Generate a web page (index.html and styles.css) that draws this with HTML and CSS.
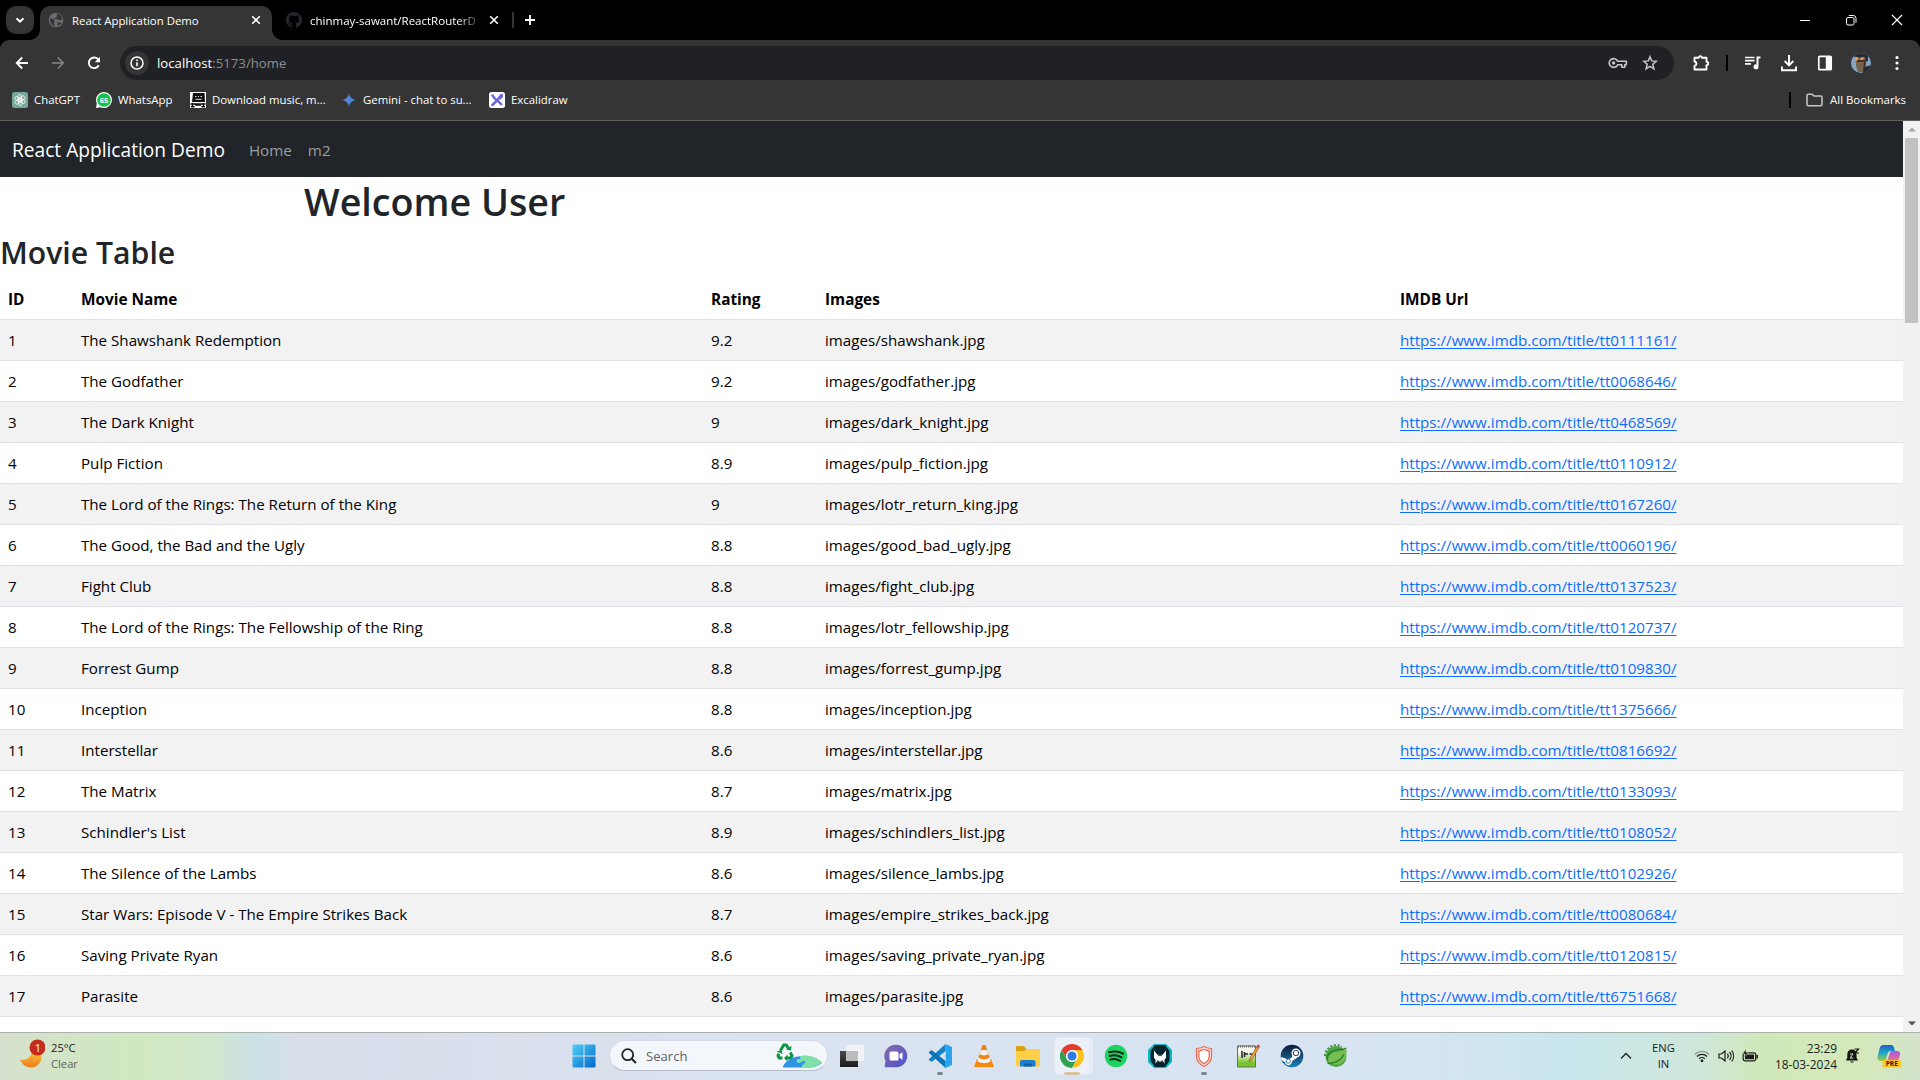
FILE: index.html
```html
<!DOCTYPE html>
<html lang="en">
<head>
<meta charset="utf-8">
<title>React Application Demo</title>
<link rel="stylesheet" href="styles.css">
</head>
<body>
<div class="screen">
  <header class="tabstrip">
    <button class="tab-search"><svg width="12" height="12" viewBox="0 0 12 12"><path d="M2.5 4.2 6 7.7l3.5-3.5" fill="none" stroke="#fff" stroke-width="2"/></svg></button>
    <div class="tab active">
      <svg class="favicon" width="16" height="16" viewBox="0 0 16 16"><circle cx="8" cy="8" r="7.3" fill="#696c70"/><path d="M2.3 6.2c2 .3 3.7 1 4.3 2.3.5 1.200-.8 1.800-.5 3.300l1 2.200C4 13.800 1.500 11 2.300 6.200zM9 1.600C8.200 3 9.800 4 8.600 5.200 7.600 6.200 6 5.400 6.100 6.900c1.700.3 2.600-.2 3.900.7 1.400 1 2.500.2 4.200-.2C14.200 4 12 1.900 9 1.600zM10 10.500c1.300-.6 2.500 0 3.200.6-.8 1.400-2 2.300-3.600 2.700-.3-1-.4-2.600.4-3.300z" fill="#353535"/></svg>
      <span class="tab-title">React Application Demo</span>
      <svg class="close" width="10" height="10" viewBox="0 0 10 10"><path d="m1.200 1.200 7.600 7.600M8.800 1.200 1.200 8.800" stroke="#fff" stroke-width="1.600"/></svg>
    </div>
    <div class="tab">
      <svg class="favicon" width="16" height="16" viewBox="0 0 16 16"><path fill="#24292f" d="M8 0C3.580 0 0 3.580 0 8c0 3.540 2.290 6.530 5.470 7.590.4.070.55-.17.55-.38 0-.19-.010-.82-.010-1.490-2.010.37-2.530-.49-2.690-.94-.090-.23-.48-.94-.82-1.130-.28-.15-.68-.52-.010-.53.63-.010 1.080.58 1.230.82.72 1.210 1.870.87 2.330.66.070-.52.28-.87.51-1.070-1.780-.2-3.640-.89-3.640-3.950 0-.87.31-1.590.82-2.150-.080-.2-.36-1.020.080-2.120 0 0 .67-.21 2.200.82a7.600 7.600 0 0 1 4 0c1.530-1.040 2.200-.82 2.200-.82.44 1.100.16 1.920.080 2.120.51.56.82 1.270.82 2.150 0 3.070-1.870 3.750-3.650 3.950.29.25.54.73.54 1.480 0 1.070-.010 1.930-.010 2.200 0 .21.15.46.55.38A8 8 0 0 0 8 0z"/></svg>
      <span class="tab-title fade">chinmay-sawant/ReactRouterDemo</span>
      <svg class="close" width="10" height="10" viewBox="0 0 10 10"><path d="m1.200 1.200 7.600 7.600M8.800 1.200 1.200 8.800" stroke="#fff" stroke-width="1.600"/></svg>
    </div>
    <i class="tab-rule"></i>
    <svg class="newtab" width="12" height="12" viewBox="0 0 12 12"><path d="M6 1v10M1 6h10" stroke="#fff" stroke-width="1.800"/></svg>
    <div class="window-buttons">
      <svg width="12" height="12" viewBox="0 0 12 12"><path d="M1 6.500h10" stroke="#fff"/></svg>
      <svg width="12" height="12" viewBox="0 0 12 12"><rect x="1.500" y="3.500" width="7.500" height="7.500" rx="1.500" fill="none" stroke="#fff"/><path d="M3.800 1.500h4.400a2.800 2.800 0 0 1 2.800 2.800v4.400" fill="none" stroke="#fff"/></svg>
      <svg width="12" height="12" viewBox="0 0 12 12"><path d="m1 1 10 10M11 1 1 11" stroke="#fff" stroke-width="1.200"/></svg>
    </div>
  </header>

  <div class="toolbar">
    <div class="nav-buttons">
      <svg width="14" height="14" viewBox="0 0 14 14"><path d="M13 7H2M7.200 1.500 1.700 7l5.500 5.500" fill="none" stroke="#fff" stroke-width="1.800"/></svg>
      <svg width="14" height="14" viewBox="0 0 14 14"><path d="M1 7h11M6.800 1.500 12.300 7l-5.500 5.500" fill="none" stroke="#868686" stroke-width="1.600"/></svg>
      <svg width="14" height="14" viewBox="0 0 14 14"><path d="M11.800 9.300A5.300 5.300 0 1 1 11 3.200L12.300 5" fill="none" stroke="#fff" stroke-width="1.900"/><path d="M13 .8v5.400H7.800z" fill="#fff"/></svg>
    </div>
    <div class="omnibox">
      <span class="site-info"><svg width="14" height="14" viewBox="0 0 14 14"><circle cx="7" cy="7" r="6" fill="none" stroke="#fff" stroke-width="1.500"/><path d="M7 6.200v4M7 3.400v1.500" stroke="#fff" stroke-width="1.600"/></svg></span>
      <span class="url"><b>localhost</b>:5173/home</span>
      <svg width="20" height="12" viewBox="0 0 20 12"><path d="M9.600 4.200h8.700v3.600h-1.500v2.400h-3V7.800H9.600a4.400 4.400 0 1 1 0-3.600z" fill="none" stroke="#c7c7c7" stroke-width="1.600" stroke-linejoin="round"/><circle cx="5.600" cy="6" r="1.700" fill="#c7c7c7"/></svg>
      <svg width="16" height="16" viewBox="0 0 16 16"><path d="m8 1.700 1.700 4.200 4.600.4-3.500 3 1.100 4.500L8 11.400l-3.900 2.400 1.100-4.500-3.500-3 4.600-.4z" fill="none" stroke="#c7c7c7" stroke-width="1.500"/></svg>
    </div>
    <div class="actions">
      <svg class="puzzle" width="18" height="18" viewBox="0 0 18 18"><path d="M2.500 3.700h4.200a1.600 1.600 0 0 1 3.200 0h4.600v4.100a1.700 1.700 0 0 1 0 3.400v4.300h-12v-3.700c2.600-.7 2.600-3.600 0-4.300z" fill="none" stroke="#fff" stroke-width="1.900" stroke-linejoin="round"/></svg>
      <i class="rule"></i>
      <svg class="playlist" width="18" height="16" viewBox="0 0 18 16"><path d="M1 2.500h9.500M1 5.700h9.500M1 8.900h6" stroke="#fff" stroke-width="1.700"/><path d="M12.500 1.500h4v2h-2v8.300a2.500 2.500 0 1 1-2-2.400z" fill="#fff"/></svg>
      <svg class="download" width="18" height="18" viewBox="0 0 18 18"><path d="M9 1v10M4.700 7 9 11.300 13.300 7M2 12.500v3.700h14v-3.700" fill="none" stroke="#fff" stroke-width="1.900"/></svg>
      <svg class="panel" width="16" height="16" viewBox="0 0 16 16"><rect x="1.800" y="1.300" width="12.400" height="13.400" rx="1" fill="none" stroke="#fff" stroke-width="1.700"/><path d="M8.800 1h5.400v14H8.800z" fill="#fff"/></svg>
      <svg class="avatar" width="20" height="20" viewBox="0 0 20 20"><defs><clipPath id="av"><circle cx="10" cy="10" r="10"/></clipPath></defs><g clip-path="url(#av)"><path fill="#86a5c7" d="M0 0h20v20H0z"/><path fill="#262a31" d="M3 0h14v8l-3 1-3-4-7 1zM11 20l2-6 8-2v8z"/><path fill="#8a6243" d="M4 5l10-1 1 9-4 6-5-2z"/><path fill="#d79a61" d="M4 4h3v4H4zM9 5l4-1-2 6z"/><path fill="#3d2e26" d="M6 7h8v2H6zM13 8l2 1-1 6-2 2z"/><path fill="#746250" d="M5 11l7-1-1 9-4 0z"/></g></svg>
      <svg class="menu" width="4" height="16" viewBox="0 0 4 16"><g fill="#fff"><circle cx="2" cy="2.500" r="1.600"/><circle cx="2" cy="8" r="1.600"/><circle cx="2" cy="13.500" r="1.600"/></g></svg>
    </div>
  </div>

  <nav class="bookmarks">
    <a class="bm chatgpt"><svg width="16" height="16" viewBox="0 0 16 16"><rect width="16" height="16" rx="2.500" fill="#75a99b"/><g fill="none" stroke="#fff" stroke-width=".75"><rect x="5.800" y="2.400" width="3.800" height="7" rx="1.900"/><rect x="5.800" y="2.400" width="3.800" height="7" rx="1.900" transform="rotate(60 8 8)"/><rect x="5.800" y="2.400" width="3.800" height="7" rx="1.900" transform="rotate(120 8 8)"/><rect x="5.800" y="2.400" width="3.800" height="7" rx="1.900" transform="rotate(180 8 8)"/><rect x="5.800" y="2.400" width="3.800" height="7" rx="1.900" transform="rotate(240 8 8)"/><rect x="5.800" y="2.400" width="3.800" height="7" rx="1.900" transform="rotate(300 8 8)"/></g></svg><span>ChatGPT</span></a>
    <a class="bm whatsapp"><svg width="16" height="16" viewBox="0 0 16 16"><path d="M8 0a8 8 0 1 1-3.500 15.200L0 16l.8-4.500A8 8 0 0 1 8 0z" fill="#fff"/><circle cx="8" cy="8" r="6.800" fill="#12c24a"/><text x="8" y="10.900" text-anchor="middle" class="wa-count">65</text></svg><span>WhatsApp</span></a>
    <a class="bm music"><svg width="16" height="16" viewBox="0 0 16 16"><path fill="#fff" d="M0 0h16v16H0z"/><path d="M3 1h11.500l.5 9H2z" fill="#111"/><path d="M5 4.500h1.500M8 4.500h1M10.500 4.500H12M5.500 7.300h6" stroke="#ddd"/><path d="M.5 12h15M2.500 11v3.500M13.500 11v3.500M1 14.700h3.500M11.500 14.700H15M5 13h6" stroke="#111" stroke-width="1.500"/></svg><span>Download music, m...</span></a>
    <a class="bm gemini"><svg width="14" height="14" viewBox="0 0 14 14"><defs><linearGradient id="gm"><stop stop-color="#9a78c4"/><stop offset=".5" stop-color="#4b86dc"/><stop offset="1" stop-color="#2b9cd8"/></linearGradient></defs><path d="M7 0c.5 4 3 6.500 7 7-4 .5-6.500 3-7 7-.5-4-3-6.500-7-7 4-.5 6.500-3 7-7z" fill="url(#gm)"/></svg><span>Gemini - chat to su...</span></a>
    <a class="bm excalidraw"><svg width="16" height="16" viewBox="0 0 16 16"><rect width="16" height="16" rx="2.500" fill="#fff"/><path d="M3 2.500c1 2.500 3 4.500 5 6s3.500 3 5 4.500M12.500 2.500 8.500 8 3 13.500" fill="none" stroke="#6965db" stroke-width="2.400"/><path d="m9.500 5 4.500-3.500v3.500l-3 3zM2 13l3-3.500L6.500 11 3.500 14.500z" fill="#6965db"/></svg><span>Excalidraw</span></a>
    <div class="all-bookmarks"><i class="rule"></i><svg width="17" height="14" viewBox="0 0 17 14"><path d="M1 2.500A1.300 1.300 0 0 1 2.300 1.200H6.200L7.900 3H14.700A1.300 1.300 0 0 1 16 4.300v7.200a1.300 1.300 0 0 1-1.300 1.300H2.300A1.300 1.300 0 0 1 1 11.500z" fill="none" stroke="#c7c7c7" stroke-width="1.500"/></svg><span>All Bookmarks</span></div>
  </nav>

  <div class="viewport">
    <main class="page">
      <nav class="navbar"><span class="brand">React Application Demo</span><a>Home</a><a>m2</a></nav>
      <h1>Welcome User</h1>
      <h2>Movie Table</h2>
      <table>
        <colgroup><col class="c-id"><col class="c-name"><col class="c-rating"><col class="c-img"><col></colgroup>
        <thead><tr><th>ID</th><th>Movie Name</th><th>Rating</th><th>Images</th><th>IMDB Url</th></tr></thead>
        <tbody>
          <tr><td>1</td><td>The Shawshank Redemption</td><td>9.2</td><td>images/shawshank.jpg</td><td><a>https://www.imdb.com/title/tt0111161/</a></td></tr>
          <tr><td>2</td><td>The Godfather</td><td>9.2</td><td>images/godfather.jpg</td><td><a>https://www.imdb.com/title/tt0068646/</a></td></tr>
          <tr><td>3</td><td>The Dark Knight</td><td>9</td><td>images/dark_knight.jpg</td><td><a>https://www.imdb.com/title/tt0468569/</a></td></tr>
          <tr><td>4</td><td>Pulp Fiction</td><td>8.9</td><td>images/pulp_fiction.jpg</td><td><a>https://www.imdb.com/title/tt0110912/</a></td></tr>
          <tr><td>5</td><td>The Lord of the Rings: The Return of the King</td><td>9</td><td>images/lotr_return_king.jpg</td><td><a>https://www.imdb.com/title/tt0167260/</a></td></tr>
          <tr><td>6</td><td>The Good, the Bad and the Ugly</td><td>8.8</td><td>images/good_bad_ugly.jpg</td><td><a>https://www.imdb.com/title/tt0060196/</a></td></tr>
          <tr><td>7</td><td>Fight Club</td><td>8.8</td><td>images/fight_club.jpg</td><td><a>https://www.imdb.com/title/tt0137523/</a></td></tr>
          <tr><td>8</td><td>The Lord of the Rings: The Fellowship of the Ring</td><td>8.8</td><td>images/lotr_fellowship.jpg</td><td><a>https://www.imdb.com/title/tt0120737/</a></td></tr>
          <tr><td>9</td><td>Forrest Gump</td><td>8.8</td><td>images/forrest_gump.jpg</td><td><a>https://www.imdb.com/title/tt0109830/</a></td></tr>
          <tr><td>10</td><td>Inception</td><td>8.8</td><td>images/inception.jpg</td><td><a>https://www.imdb.com/title/tt1375666/</a></td></tr>
          <tr><td>11</td><td>Interstellar</td><td>8.6</td><td>images/interstellar.jpg</td><td><a>https://www.imdb.com/title/tt0816692/</a></td></tr>
          <tr><td>12</td><td>The Matrix</td><td>8.7</td><td>images/matrix.jpg</td><td><a>https://www.imdb.com/title/tt0133093/</a></td></tr>
          <tr><td>13</td><td>Schindler's List</td><td>8.9</td><td>images/schindlers_list.jpg</td><td><a>https://www.imdb.com/title/tt0108052/</a></td></tr>
          <tr><td>14</td><td>The Silence of the Lambs</td><td>8.6</td><td>images/silence_lambs.jpg</td><td><a>https://www.imdb.com/title/tt0102926/</a></td></tr>
          <tr><td>15</td><td>Star Wars: Episode V - The Empire Strikes Back</td><td>8.7</td><td>images/empire_strikes_back.jpg</td><td><a>https://www.imdb.com/title/tt0080684/</a></td></tr>
          <tr><td>16</td><td>Saving Private Ryan</td><td>8.6</td><td>images/saving_private_ryan.jpg</td><td><a>https://www.imdb.com/title/tt0120815/</a></td></tr>
          <tr><td>17</td><td>Parasite</td><td>8.6</td><td>images/parasite.jpg</td><td><a>https://www.imdb.com/title/tt6751668/</a></td></tr>
          <tr><td>18</td><td>Gladiator</td><td>8.5</td><td>images/gladiator.jpg</td><td><a>https://www.imdb.com/title/tt0172495/</a></td></tr>
        </tbody>
      </table>
    </main>
    <div class="scrollbar">
      <svg width="8" height="5" viewBox="0 0 8 5"><path d="M0 4.500 4 .5l4 4z" fill="#a3a3a3"/></svg>
      <i class="thumb"></i>
      <svg width="8" height="5" viewBox="0 0 8 5"><path d="M0 .5h8l-4 4z" fill="#505050"/></svg>
    </div>
  </div>

  <footer class="taskbar">
    <div class="weather">
      <svg width="26" height="30" viewBox="0 0 26 30"><defs><linearGradient id="mn" x2="0" y2="1"><stop stop-color="#f6c23a"/><stop offset="1" stop-color="#f07a1c"/></linearGradient></defs><path d="M1 20.500c5 1.500 11-1 12-8h8c4 8-1 16-9 16-5 0-9-3-11-8z" fill="url(#mn)"/><circle cx="18.500" cy="8.500" r="8" fill="#c42b1c"/><text x="19" y="12.600" text-anchor="middle" class="badge">1</text></svg>
      <p><span>25°C</span><span class="muted">Clear</span></p>
    </div>
    <div class="apps">
      <div class="app"><svg width="24" height="24" viewBox="0 0 24 24"><defs><linearGradient id="wn" x2="1" y2="1"><stop stop-color="#4fd0fb"/><stop offset="1" stop-color="#0067c8"/></linearGradient></defs><path d="M.5 1.500a1 1 0 0 1 1-1H11.500v11H.5zM12.500.5h10a1 1 0 0 1 1 1v10h-11zM.5 12.500h11v11H1.500a1 1 0 0 1-1-1zM12.500 12.500h11v10a1 1 0 0 1-1 1h-10z" fill="url(#wn)"/></svg></div>
      <div class="search">
        <svg width="16" height="16" viewBox="0 0 16 16"><circle cx="6.700" cy="6.700" r="5.500" fill="none" stroke="#222" stroke-width="1.800"/><path d="m10.700 10.700 4.300 4.300" stroke="#222" stroke-width="2"/></svg>
        <span>Search</span>
        <svg class="earth" width="48" height="28" viewBox="0 0 48 28"><g fill="none" stroke="#0c9440" stroke-width="3" stroke-linejoin="round"><path d="m5.500 8.500 3.200-5.500h2.600l2.500 4M15.300 10.500l1.700 3.200-1.200 2.300h-4M7.500 16H4.200L3 13.700l1-2"/></g><path d="m11 7.500 5 1 .5-4.800zM12.500 12.500v7L9 16zM1.500 9.500l5-1.500L7.500 12z" fill="#0c9440"/><path d="M7.500 25.500c5-14 30-15 39.500-4.500-4 3-8 4.500-12 4.500z" fill="#2f93e6"/><path d="M22 20.500c-1-3 0-4 4-3.500-3-2 0-3 2-3.500 8-.5 14 2 19 7-4 3-8 5-12 5h-8c-1-3 4-4 3-6-2-2-5 3-8 1z" fill="#7fe0a8"/></svg>
      </div>
      <div class="app"><svg width="24" height="24" viewBox="0 0 24 24"><defs><linearGradient id="tv" y2="1" x2="0"><stop stop-color="#4a4a4a"/><stop offset="1" stop-color="#1c1c1c"/></linearGradient></defs><path d="M0 7h18v16H0z" fill="url(#tv)"/><path d="M6 1h18v16H6z" fill="#f3f3f3" opacity=".9"/><path d="M6 7h12v10H6z" fill="#bcbcbc"/></svg></div>
      <div class="app"><svg width="24" height="24" viewBox="0 0 24 24"><defs><linearGradient id="ct" x2="1" y2="1"><stop stop-color="#8a6aa8"/><stop offset="1" stop-color="#4b53cf"/></linearGradient></defs><path d="M12 .8a11.200 11.200 0 1 1 0 22.400H1.500a1 1 0 0 1-.8-1.200l.8-5A11.200 11.200 0 0 1 12 .8z" fill="url(#ct)"/><rect x="5.500" y="7.500" width="9" height="9" rx="1.500" fill="#fff"/><path d="m15.500 10.500 3-2.500v8l-3-2.500z" fill="#fff"/></svg></div>
      <div class="app running"><svg width="24" height="24" viewBox="0 0 24 24"><path d="m17.500 0 .2 7L3.500 18 .5 15.500z" fill="#1583c7"/><path d="m.5 8.500 3-2.500 14.200 11-.2 7z" fill="#0b73b7"/><path d="M17.500 0 24 3v18l-6.500 3-1-1 1.200-2V3z" fill="#27a5ef"/></svg></div>
      <div class="app"><svg width="24" height="24" viewBox="0 0 24 24"><path d="m5 15-3 8h20l-3-8z" fill="#f58709"/><path d="M10.500 1h3L19 18c-3 3-11 3-14 0z" fill="#f08113"/><path d="m9 6-1.400 4.300c2 1.500 6.800 1.500 8.800 0L15 6zM6.400 13.600 5.300 17.300c3 2.500 10.400 2.500 13.400 0l-1.100-3.700c-3 2.200-8.200 2.200-11.200 0z" fill="#f2efec"/></svg></div>
      <div class="app"><svg width="24" height="24" viewBox="0 0 24 24"><path d="M0 3a1 1 0 0 1 1-1h7l2.500 3v4H0z" fill="#dfa010"/><path d="M0 7h8l2-2h13a1 1 0 0 1 1 1v15.500a1 1 0 0 1-1 1H1a1 1 0 0 1-1-1z" fill="#ffcf48"/><path d="M4 22.500V18a2 2 0 0 1 2-2h11.500a2 2 0 0 1 2 2v4.500z" fill="#1b7ed0"/><path d="M8 19.500h8v3H8z" fill="#0c60ae"/></svg></div>
      <div class="app selected"><svg width="24" height="24" viewBox="0 0 24 24"><circle cx="12" cy="12" r="12" fill="#fff"/><path d="M1.600 6a12 12 0 0 1 20.800 0H12a6 6 0 0 0-5.200 9z" fill="#e33b2e"/><path d="M1.600 6A12 12 0 0 0 12 24l5.200-9a6 6 0 0 1-10.400 0z" fill="#2da14d"/><path d="M22.400 6A12 12 0 0 1 12 24l5.200-9a6 6 0 0 0-5.200-9z" fill="#fcc31e"/><circle cx="12" cy="12" r="5.800" fill="#fff"/><circle cx="12" cy="12" r="4.600" fill="#2f7ce8"/></svg></div>
      <div class="app"><svg width="24" height="24" viewBox="0 0 24 24"><circle cx="12" cy="12" r="11.200" fill="#1ed35f"/><path d="M5 8.300c4.700-1.400 10-1 14 1.300M5.600 12c4-1.200 8.600-.7 12 1.300M6.200 15.600c3.400-1 7-.6 10 1.200" fill="none" stroke="#10271a" stroke-width="2" stroke-linecap="round"/></svg></div>
      <div class="app"><svg width="24" height="24" viewBox="0 0 24 24"><path d="M6 0h12l6 6v12l-6 6H6l-6-6V6z" fill="#0ab7c2"/><path d="M7 1h10l4.500 6v10L17 23H7l-4.500-6V7z" fill="#04252d"/><path d="M6 6.500 9.500 11l.8-1v2.500l1.700-1 1.700 1V10l.8 1L18 6.500V14l-1.500 1.500v4L14 16l-.8 1.500h-2.400L10 16l-2.500 3.500v-4L6 14z" fill="#fff"/></svg></div>
      <div class="app running"><svg width="24" height="24" viewBox="0 0 24 24"><path d="M12 2.500c2.500 1.500 5 2 7.500 2v8c0 4-2.500 7.500-7.500 10-5-2.500-7.500-6-7.500-10v-8c2.500 0 5-.5 7.500-2z" fill="#fae5e0" stroke="#ec6a50" stroke-width="1.200"/><path d="M12 5.200c1.800 1 3.500 1.500 5.200 1.600v5.700c0 3-1.700 5.300-5.200 7.200-3.500-1.900-5.200-4.200-5.200-7.200V6.800c1.700-.1 3.400-.6 5.200-1.600z" fill="#fff" stroke="#ec6a50" stroke-width="1.300"/></svg></div>
      <div class="app"><svg width="24" height="24" viewBox="0 0 24 24"><defs><linearGradient id="np" x2="0" y2="1"><stop offset=".35" stop-color="#f5f7ef"/><stop offset=".8" stop-color="#76c52c"/></linearGradient></defs><path d="M1.500 2h18v21h-18z" fill="url(#np)" stroke="#66705f"/><path d="M2 2.500h17" stroke="#666" stroke-width="2" stroke-dasharray="1 1"/><path d="M6 7v7M8.500 8v5M9 10h3M13.500 10h3" stroke="#222" stroke-width="1.500"/><path d="m13 18 1-4 7.500-12.500 2 1.200L16 15.500z" fill="#eaa33b" stroke="#8a5a22" stroke-width=".7"/><path d="m20.500 3 1.300-2.500 2 1L22.500 4z" fill="#c5483f"/></svg></div>
      <div class="app"><svg width="24" height="24" viewBox="0 0 24 24"><defs><linearGradient id="st" x2="0" y2="1"><stop stop-color="#101b3b"/><stop offset="1" stop-color="#1781b5"/></linearGradient></defs><circle cx="12" cy="12" r="11.300" fill="url(#st)"/><path d="m1 13 6.500 2.200 3.500-1 3-4.500 3 4-4.500 3-1 2.500c-1.500 3-6 2.500-6.500-1L1.500 16z" fill="#fff"/><circle cx="16" cy="9" r="4.500" fill="#fff"/><circle cx="16" cy="9" r="3" fill="#16264b"/><circle cx="16" cy="9" r="2.200" fill="#fff"/><circle cx="8.300" cy="17.200" r="2.100" fill="none" stroke="#17608e" stroke-width=".8"/></svg></div>
      <div class="app"><svg width="24" height="24" viewBox="0 0 24 24"><path d="M12 12m-11 0a11 11 0 0 1 17-9" fill="none" stroke="#3d8b3c" stroke-width="2" stroke-dasharray="2 1.700"/><circle cx="12" cy="12.500" r="10.500" fill="#4fa644"/><path d="M22.500 5c-4 3-9 2-13 3.500-5 2-6.500 7-4 10.500 7 3 14 1 16-5 1-3 1.500-6 1-9z" fill="#74bf4f"/><path d="M3.500 19.500c7 0 13-2.500 16.500-9M3 16c0-6 4-9 9-10 4-.7 8 0 10-2" fill="none" stroke="#2f7d35" stroke-width="1.500"/></svg></div>
    </div>
    <div class="tray">
      <svg class="chev" width="12" height="8" viewBox="0 0 12 8"><path d="m1 6.500 5-5 5 5" fill="none" stroke="#222" stroke-width="1.400"/></svg>
      <p class="lang"><span>ENG</span><span>IN</span></p>
      <svg class="wifi" width="16" height="14" viewBox="0 0 16 14"><g fill="none" stroke="#1c1c1c" stroke-width="1.200"><path d="M.8 5.500a10 10 0 0 1 14.400 0" opacity=".35"/><path d="M3 7.500a7 7 0 0 1 10 0M5.200 9.800a4 4 0 0 1 5.600 0"/></g><circle cx="8" cy="11.800" r="1.400" fill="#1c1c1c"/></svg>
      <svg class="vol" width="17" height="14" viewBox="0 0 17 14"><g fill="none" stroke="#1c1c1c" stroke-width="1.200"><path d="M1 5v4h2.500l3.500 3V2L3.500 5zM9.300 4.800a3 3 0 0 1 0 4.400M11.500 3a6 6 0 0 1 0 8M13.700 1.500a9 9 0 0 1 0 11"/></g></svg>
      <svg class="bat" width="17" height="14" viewBox="0 0 17 14"><rect x="1.200" y="3.800" width="12.500" height="8" rx="1.800" fill="none" stroke="#1c1c1c" stroke-width="1.300"/><path d="M3 5.500h9v4.800H3zM14.500 6h1.500v3.500h-1.500z" fill="#1c1c1c"/><path d="M4 0 .5 5H3L2 8.500 6.500 3.300H4z" fill="#1c1c1c" stroke="#d3e8cc" stroke-width=".5"/></svg>
      <p class="clock"><span>23:29</span><span>18-03-2024</span></p>
      <svg class="bell" width="15" height="16" viewBox="0 0 15 16"><path d="M6.500 1.500c3.500 0 5 2 5 5v3l1.500 3H1l1.300-3v-3c0-3 1.700-5 4.200-5zM5 13.500h4c-.5 1.500-3.500 1.500-4 0z" fill="#151515"/><path d="M5 6h3l-3 4h3.300" fill="none" stroke="#d3e8b8" stroke-width="1"/><path d="M9.500 1h4l-3.500 4h4" fill="none" stroke="#151515" stroke-width="1.200"/></svg>
      <svg class="copilot" width="24" height="24" viewBox="0 0 24 24"><defs><linearGradient id="cp1" x2="0" y2="1"><stop stop-color="#1b5fc4"/><stop offset=".5" stop-color="#1fa8c8"/><stop offset="1" stop-color="#9ecb3b"/></linearGradient><linearGradient id="cp2" x2="0" y2="1"><stop stop-color="#a45be0"/><stop offset="1" stop-color="#f4718b"/></linearGradient></defs><path d="M6.500 1H14c2 0 2.500 1 3 2.500L18 7h-4c-2 0-3 1-3.500 3L8.500 17H4c-2.500 0-4-2-3.300-5l2-8C3.300 2 4.500 1 6.500 1z" fill="url(#cp1)"/><path d="M15.500 7H20c2.500 0 3.700 2 3 4.500l-2 6H10l2.700-8C13.200 7.700 14 7 15.500 7z" fill="url(#cp2)"/><rect x="5.500" y="16" width="18.500" height="7.500" rx="2" fill="#ffc81f"/><text x="14.800" y="22.300" text-anchor="middle" class="pre">PRE</text></svg>
    </div>
  </footer>
</div>
</body>
</html>
```
FILE: styles.css
```css
* { box-sizing: border-box; }
body { margin: 0; overflow: hidden; font-family: "Segoe UI", "Open Sans", sans-serif; }
svg { display: block; flex: none; }
p { margin: 0; }
.screen { width: 1920px; height: 1080px; display: flex; flex-direction: column; background: #000; overflow: hidden; }

/* tab strip */
.tabstrip { height: 40px; flex: none; display: flex; align-items: center; padding-left: 6px; background: #000; color: #fff; font-size: 11.4px; }
.tab-search { width: 28px; height: 28px; margin-right: 6px; padding: 0; border: 0; border-radius: 10px; background: #353535; display: grid; place-items: center; }
.tab { width: 232px; height: 34px; align-self: flex-end; display: flex; align-items: center; padding: 0 11px 6px 8px; position: relative; }
.tab.active { background: #353535; border-radius: 10px 10px 0 0; }
.tab.active::before, .tab.active::after { content: ""; position: absolute; bottom: 0; width: 10px; height: 10px; }
.tab.active::before { left: -10px; background: radial-gradient(circle at 0 0, transparent 9.5px, #353535 10px); }
.tab.active::after { right: -10px; background: radial-gradient(circle at 100% 0, transparent 9.5px, #353535 10px); }
.tab:not(.active) { width: 240px; padding-left: 14px; padding-right: 13px; }
.tab-title { flex: 1; margin: 2px 0 0 8px; line-height: 16px; white-space: nowrap; overflow: hidden; }
.tab-title.fade { margin-right: 14px; -webkit-mask-image: linear-gradient(90deg, #000 148px, transparent 173px); mask-image: linear-gradient(90deg, #000 148px, transparent 173px); font-size: 11.5px; }
.tab-rule { width: 2px; height: 16px; background: #353535; }
.newtab { margin-left: 10px; }
.window-buttons { margin-left: auto; display: flex; gap: 34px; padding-right: 17px; }

/* toolbar */
.toolbar { height: 46px; flex: none; display: flex; align-items: center; background: #353535; border-radius: 9px 9px 0 0; }
.nav-buttons { width: 120px; display: flex; gap: 22px; padding-left: 15px; }
.omnibox { width: 1554px; height: 34px; border-radius: 17px; background: #202124; display: flex; align-items: center; gap: 14px; padding: 0 16px 0 5px; }
.site-info { width: 24px; height: 24px; border-radius: 50%; background: #353535; display: grid; place-items: center; }
.url { flex: 1; margin-left: -6px; color: #8e8f91; font-size: 13.2px; line-height: 20px; }
.url b { font-weight: 400; color: #fff; }
.actions { display: flex; align-items: center; padding-left: 18px; }
.rule { width: 2px; height: 16px; background: #000; }
.actions .rule, .actions .playlist { margin-left: 16px; }
.download { margin-left: 18px; }
.panel { margin-left: 19px; }
.avatar { margin-left: 18px; }
.menu { margin-left: 24px; }

/* bookmarks */
.bookmarks { height: 35px; flex: none; display: flex; padding: 6px 14px 0 12px; background: #353535; border-bottom: 1px solid #606060; color: #fff; font-size: 11.4px; line-height: 16px; }
.bm { display: flex; gap: 6px; white-space: nowrap; }
.chatgpt { width: 84px; }
.whatsapp { width: 94px; }
.music { width: 152px; }
.gemini { width: 147px; gap: 7px; }
.gemini svg { margin-top: 1px; }
.wa-count { font: 700 7.5px "Open Sans", sans-serif; fill: #fff; }
.all-bookmarks { margin-left: auto; display: flex; align-items: center; height: 16px; }
.all-bookmarks svg { margin: 0 7px 0 15px; }

/* page */
.viewport { height: 911px; flex: none; display: flex; }
.page { width: 1903px; background: #fff; overflow: hidden; color: #212529; }
.navbar { height: 56px; padding: 1px 12px 0; display: flex; align-items: center; background: #212529; color: #9b9d9e; font-size: 15.2px; }
.navbar .brand { color: #fff; font-size: 19.15px; margin-right: 24px; }
.navbar a { margin-right: 16px; }
h1 { margin: 0 0 7px; padding: 1px 0 0 304px; font-size: 37.7px; font-weight: 600; line-height: 48px; }
h2 { margin: 0 0 7px; padding-top: 1px; font-size: 30.2px; font-weight: 600; line-height: 38px; }
table { width: 1903px; table-layout: fixed; border-spacing: 0; color: #000; font-size: 15.15px; line-height: 24px; }
.c-id { width: 73px; }
.c-name { width: 630px; }
.c-rating { width: 114px; }
.c-img { width: 575px; }
th, td { height: 41px; padding: 8px; text-align: left; white-space: nowrap; border-bottom: 1px solid #dee2e6; }
th { font-size: 15.35px; font-weight: 700; }
tbody tr:nth-child(odd) { background: #f2f2f2; }
td a { color: #0d6efd; text-decoration: underline; text-decoration-thickness: 1px; text-underline-offset: 2px; }

.scrollbar { width: 17px; background: #f1f1f1; display: flex; flex-direction: column; align-items: center; padding: 6px 0; }
.thumb { width: 13px; height: 185px; margin: 6px 0 auto; background: #c1c1c1; }

/* taskbar */
.taskbar { height: 48px; flex: none; display: flex; align-items: center; padding-bottom: 2px; border-top: 1px solid #a9b0ad; color: #1a1a1a;
  background: linear-gradient(90deg, #d5e1cd 0, #d0e8c0 135px, #d1e6cb 205px, #cce1e6 260px, #d8deea 300px, #dae3f0 800px, #d7e4f2 1400px, #c8e6ec 1570px, #cfe7da 1700px, #d0e8b9 1760px, #d4e9ba 1860px, #d4e3cb 1920px); }
.taskbar p { display: flex; flex-direction: column; font-size: 11.2px; line-height: 16px; }
.weather { width: 562px; display: flex; gap: 6px; padding-left: 19px; }
.weather svg { margin-top: -1px; }
.muted { color: #5b625b; }
.badge { font: 11px "Open Sans", sans-serif; fill: #fff; }
.apps { display: flex; align-items: center; }
.app { width: 44px; height: 38px; display: grid; place-items: center; position: relative; }
.app:first-child { margin-right: 3px; }
.running::after, .selected::after { content: ""; position: absolute; bottom: 0; left: 19px; width: 6px; height: 3px; border-radius: 2px; background: #7d838a; }
.selected::after { left: 14px; width: 16px; background: #d6c49f; }
.selected::before { content: ""; position: absolute; inset: 0 4px 0 4px; border-radius: 4px; background: #ecf1f9; border: 1px solid #e4e9f2; box-shadow: 4px 0 0 -1px #e8eef8; }
.selected svg { position: relative; }
.search { width: 219px; height: 31px; margin-right: 2px; display: flex; align-items: center; padding: 0 4px 0 11px; border-radius: 16px; background: #f3f6fb; border: 1px solid #d2d9e4; border-bottom-color: #b4bdca; color: #606266; font-size: 13.1px; }
.search span { margin-left: 9px; }
.earth { margin-left: auto; }
.tray { margin-left: auto; display: flex; align-items: center; padding-right: 19px; }
.chev { margin-right: 1px; }
.lang { width: 61px; align-items: center; }
.vol { margin-left: 8px; }
.bat { margin-left: 7px; }
.clock { width: 78px; align-items: flex-end; }
.taskbar .clock { font-size: 11.9px; }
.bell { margin-left: 8px; }
.copilot { margin-left: 17px; }
.pre { font: 700 6.5px "Open Sans", sans-serif; fill: #222; }
```
